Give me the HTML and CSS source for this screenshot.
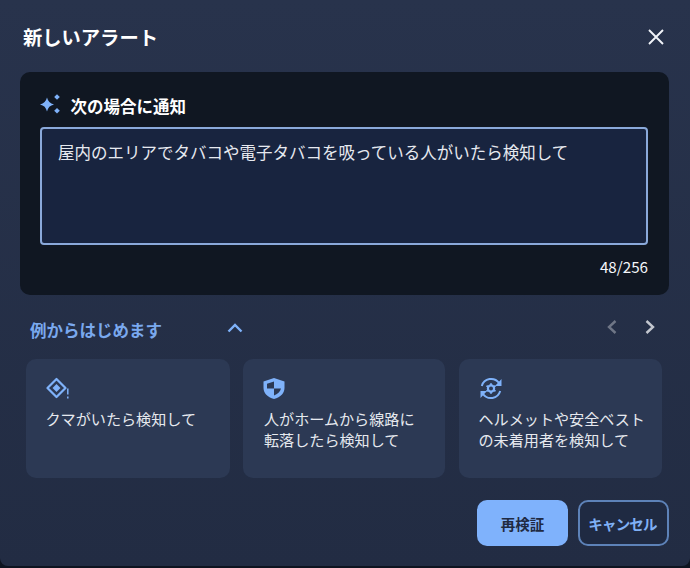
FILE: index.html
```html
<!DOCTYPE html>
<html lang="ja">
<head>
<meta charset="utf-8">
<title>新しいアラート</title>
<link rel="stylesheet" href="styles.css">
</head>
<body>
<div class="dialog">
  <header class="head">
    <h1 class="title">新しいアラート</h1>
    <button class="close" aria-label="閉じる">
      <svg width="18" height="18" viewBox="0 0 18 18"><path d="M2 2 16 16M16 2 2 16" stroke="#f1f4f9" stroke-width="1.900" fill="none"/></svg>
    </button>
  </header>
  <section class="panel">
    <div class="panel-head">
      <svg width="24" height="24" viewBox="0 0 24 24"><path d="M9 3.500C9.900 7.400 12.100 9.600 16 10.500 12.100 11.400 9.900 13.600 9 17.500 8.100 13.600 5.900 11.400 2 10.500 5.900 9.600 8.100 7.400 9 3.500Z" fill="#7fb2fa"/><path d="M19 .200 21.800 3 19 5.800 16.200 3Z" fill="#7fb2fa"/><path d="M19 13.900 21.800 16.700 19 19.500 16.200 16.700Z" fill="#7fb2fa"/></svg>
      <span>次の場合に通知</span>
    </div>
    <div class="input">屋内のエリアでタバコや電子タバコを吸っている人がいたら検知して</div>
    <div class="count">48/256</div>
  </section>
  <div class="examples-head">
    <div class="ex-title">
      <span>例からはじめます</span>
      <svg class="chev" width="16" height="10" viewBox="0 0 16 10"><path d="M1.500 8.500 8 2l6.500 6.500" stroke="#7fb2fa" stroke-width="2.400" fill="none"/></svg>
    </div>
    <div class="pager">
      <svg width="12" height="16" viewBox="0 0 12 16"><path d="M9.500 2 3 8l6.500 6" stroke="#6f7686" stroke-width="2.400" fill="none"/></svg>
      <svg width="12" height="16" viewBox="0 0 12 16"><path d="M2.500 2 9 8l-6.500 6" stroke="#c3c7cf" stroke-width="2.400" fill="none"/></svg>
    </div>
  </div>
  <div class="cards">
    <article class="card">
      <svg class="ico" width="24" height="24" viewBox="0 0 24 24"><path d="M10.500 3 19.500 12l-9 9-9-9Z" stroke="#7fb2fa" stroke-width="2.200" fill="none" stroke-linejoin="round"/><path d="M10.500 8 14.500 12l-4 4-4-4Z" fill="#7fb2fa"/><path d="M21.800 12.500v6M21.800 20.500v2" stroke="#7fb2fa" stroke-width="1.500"/></svg>
      <p>クマがいたら検知して</p>
    </article>
    <article class="card">
      <svg class="ico shield" width="24" height="24" viewBox="0 0 24 24"><path d="M12 2 22.500 5.500v6.500c0 5-3.800 9-10.500 11-6.700-2-10.500-6-10.500-11V5.500Z" fill="#7fb2fa"/><path d="M12 5.500 5 7.700V12.500h7ZM12 12.500v7c3.500-1.300 6.300-3.700 7-7Z" fill="#2c3954"/></svg>
      <p>人がホームから線路に<br>転落したら検知して</p>
    </article>
    <article class="card">
      <svg class="ico" width="24" height="24" viewBox="0 0 24 24"><path d="M2.800 10A9.700 9.700 0 0 1 20 7M21.200 15A9.700 9.700 0 0 1 4 18" stroke="#7fb2fa" stroke-width="2" fill="none"/><path d="M22.500 3v7h-6.500ZM1.500 22v-7h6.500Z" fill="#7fb2fa"/><circle cx="12" cy="12.500" r="3.100" stroke="#7fb2fa" stroke-width="2.200" fill="none"/><path d="M12 7.300v1.800M12 15.900v1.800M7.500 9.900l1.600.9M14.900 14.200l1.600.9M7.500 15.100l1.600-.9M14.900 10.800l1.600-.9" stroke="#7fb2fa" stroke-width="1.800"/></svg>
      <p>ヘルメットや安全ベスト<br>の未着用者を検知して</p>
    </article>
  </div>
  <footer class="actions">
    <button class="btn primary">再検証</button>
    <button class="btn ghost">キャンセル</button>
  </footer>
</div>
</body>
</html>
```
FILE: styles.css
```css
* { box-sizing: border-box; }
html, body { margin: 0; height: 100%; background: #0e1420; }
body {
  width: 690px;
  height: 568px;
  overflow: hidden;
  font-family: "Noto Sans CJK JP", "Noto Sans", sans-serif;
  color: #f1f4f9;
}
.dialog {
  width: 690px;
  height: 566px;
  padding: 0 21px 0 20px;
  border-radius: 0 0 8px 8px;
  background: linear-gradient(#28334c, #222c43);
  display: flex;
  flex-direction: column;
}
.head {
  height: 72px;
  display: flex;
  align-items: center;
  justify-content: space-between;
  padding: 2px 4px 0 3px;
}
.title { margin: 0; font-size: 19.300px; line-height: 28px; font-weight: 700; color: #fff; }
.close { padding: 0; border: 0; background: none; display: flex; }
.panel {
  height: 223px;
  padding: 20px 21px 0 20px;
  border-radius: 10px;
  background: #101722;
  display: flex;
  flex-direction: column;
}
.panel-head {
  height: 28px;
  margin-left: -2px;
  display: flex;
  align-items: center;
  gap: 8.500px;
  font-size: 16.500px;
  font-weight: 700;
  color: #fff;
}
.input {
  height: 118px;
  margin-top: 7px;
  padding: 10px 16px;
  border: 2px solid #8aa9da;
  border-radius: 4px;
  background: #18243f;
  font-size: 16.500px;
  line-height: 26px;
  color: #e6e9ef;
  white-space: nowrap;
}
.count {
  margin-top: 10px;
  text-align: right;
  font-size: 15.200px;
  line-height: 22px;
  color: #f4f6fa;
}
.examples-head {
  height: 64px;
  padding: 4px 13px 0 10px;
  display: flex;
  align-items: center;
  justify-content: space-between;
}
.ex-title {
  display: flex;
  align-items: center;
  gap: 65px;
  font-size: 16.500px;
  font-weight: 700;
  color: #7aa9ee;
}
.ex-title span { padding-top: 2px; }
.chev { margin-bottom: 3px; }
.pager { display: flex; gap: 26px; margin-bottom: 5px; }
.cards {
  padding: 0 6px;
  display: grid;
  grid-template-columns: 204px 202px 204px;
  gap: 13px;
}
.card {
  height: 119px;
  padding: 17px 16px 0 19.500px;
  border-radius: 10px;
  background: #2c3954;
}
.card:nth-child(2) { padding-left: 21px; }
.card:nth-child(3) { margin-left: 1px; padding-left: 19.500px; }
.ico { display: block; }
.shield { margin-left: -2px; }
.card p {
  margin: 8px 0 0;
  font-size: 15.100px;
  line-height: 21px;
  color: #e6e9ef;
  white-space: nowrap;
}
.actions {
  margin-top: 22px;
  display: flex;
  justify-content: flex-end;
  gap: 10px;
}
.btn {
  width: 91px;
  height: 46px;
  padding: 0;
  border-radius: 10px;
  font-family: inherit;
  font-size: 14.500px;
  font-weight: 700;
}
.primary { border: 0; background: #7fb2fc; color: #1f2a42; }
.ghost { border: 2px solid #5d82b8; background: #1f2a42; color: #7fb0f5; letter-spacing: -0.800px; padding-right: 2px; }
```
